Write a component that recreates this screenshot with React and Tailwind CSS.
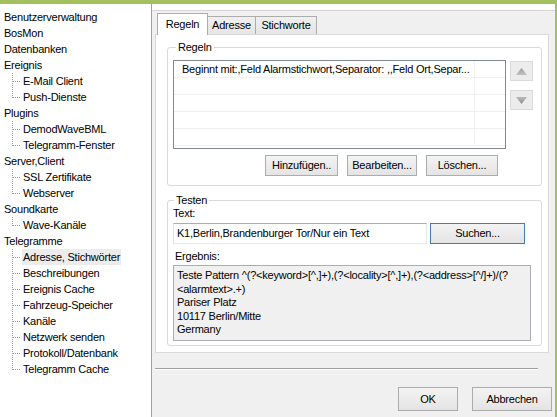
import React from 'react';

const tree = [
  { label: 'Benutzerverwaltung' },
  { label: 'BosMon' },
  { label: 'Datenbanken' },
  { label: 'Ereignis', children: ['E-Mail Client', 'Push-Dienste'] },
  { label: 'Plugins', children: ['DemodWaveBML', 'Telegramm-Fenster'] },
  { label: 'Server,Client', children: ['SSL Zertifikate', 'Webserver'] },
  { label: 'Soundkarte', children: ['Wave-Kanäle'] },
  {
    label: 'Telegramme',
    children: [
      'Adresse, Stichwörter',
      'Beschreibungen',
      'Ereignis Cache',
      'Fahrzeug-Speicher',
      'Kanäle',
      'Netzwerk senden',
      'Protokoll/Datenbank',
      'Telegramm Cache',
    ],
  },
];

const selected = 'Adresse, Stichwörter';

function Connector({ last }) {
  return (
    <svg width="22" height="16" className="shrink-0" shapeRendering="crispEdges">
      <line x1="12.5" y1="0" x2="12.5" y2={last ? 9 : 16} stroke="#a0a0a0" strokeDasharray="1 1" />
      <line x1="13" y1="8.5" x2="21" y2="8.5" stroke="#a0a0a0" strokeDasharray="1 1" />
    </svg>
  );
}

function Tree() {
  return (
    <div className="w-[152px] shrink-0 bg-white border-r border-[#a0a0a0] pt-[5px]">
      {tree.map(node => (
        <div key={node.label}>
          <div className="h-[16px] flex items-center pl-[4px]">{node.label}</div>
          {node.children?.map((c, i) => (
            <div key={c} className="h-[16px] flex items-center">
              <Connector last={i === node.children.length - 1} />
              <span className={`px-[1px] leading-[16px] ${c === selected ? 'bg-[#ececec]' : ''}`}>{c}</span>
            </div>
          ))}
        </div>
      ))}
    </div>
  );
}

function Btn({ className = '', children }) {
  return (
    <div
      className={`flex items-center justify-center border bg-linear-to-b from-[#f3f3f3] to-[#e4e4e4] ${className}`}
    >
      {children}
    </div>
  );
}

function Arrow({ up }) {
  return (
    <div className="w-[23px] h-[20px] border border-[#dadada] bg-[#ececec] flex items-center justify-center">
      <svg width="11" height="7" viewBox="0 0 11 7">
        <defs>
          <linearGradient id={up ? 'gu' : 'gd'} x1="0" y1="0" x2="0" y2="1">
            <stop offset="0" stopColor={up ? '#9a9a9a' : '#b9b9b9'} />
            <stop offset="1" stopColor={up ? '#c2c2c2' : '#8f8f8f'} />
          </linearGradient>
        </defs>
        <polygon points={up ? '0,7 5.5,0 11,7' : '0,0 5.5,7 11,0'} fill={`url(#${up ? 'gu' : 'gd'})`} />
      </svg>
    </div>
  );
}

function GroupLabel({ children, left }) {
  return (
    <span className={`absolute ${left} -top-[7px] bg-white px-[2px] leading-[13px]`}>{children}</span>
  );
}

export default function App() {
  return (
    <div className="w-[557px] h-[417px] flex flex-col overflow-hidden bg-[#f0f0f0] text-black text-[11px] tracking-[-0.22px] font-['Liberation_Sans',Arial,sans-serif]">
      <div className="h-[4px] shrink-0 bg-[#a2c05d]" />
      <div className="flex flex-1 min-h-0 border-r-2 border-[#a2c05d]">
        <Tree />
        <div className="flex-1 flex flex-col">
          <div className="h-[6px] bg-white" />
          <div className="flex-1 border-t border-[#d5d5d5] bg-[#f0f0f0] pt-[2px]">
            {/* Tabs */}
            <div className="ml-[5px] flex items-end h-[21px] relative z-10">
              <div className="w-[51px] h-[22px] -mb-px bg-white border border-b-0 border-[#acacac] flex items-center justify-center">
                Regeln
              </div>
              <div className="w-[48px] h-[18px] border border-b-0 border-l-0 border-[#acacac] bg-linear-to-b from-[#f0f0f0] to-[#e5e5e5] flex items-center justify-center">
                Adresse
              </div>
              <div className="w-[61px] h-[18px] border border-b-0 border-l-0 border-[#acacac] bg-linear-to-b from-[#f0f0f0] to-[#e5e5e5] flex items-center justify-center">
                Stichworte
              </div>
            </div>

            {/* Tab page */}
            <div className="ml-[3px] w-[394px] h-[319px] bg-white border border-[#d9d9d9] pt-[12px] pl-[11px]">
              {/* Regeln group */}
              <div className="relative w-[375px] h-[139px] border border-[#d9d9d9] rounded-[3px] pt-[12px] pl-[5px]">
                <GroupLabel left="left-[8px]">Regeln</GroupLabel>
                <div className="flex">
                  <div className="w-[333px] h-[89px] border border-[#828790] bg-white overflow-hidden">
                    {[0, 1, 2, 3, 4].map(i => (
                      <div key={i} className="flex h-[17px] border-b border-[#f0f0f0]">
                        <div className="w-[301px] border-r border-[#f0f0f0] pl-[8px] leading-[17px] whitespace-nowrap overflow-hidden">
                          {i === 0 ? 'Beginnt mit:,Feld Alarmstichwort,Separator: ,,Feld Ort,Separ...' : ''}
                        </div>
                      </div>
                    ))}
                  </div>
                  <div className="ml-[4px] mt-[1px] flex flex-col gap-[9px]">
                    <Arrow up />
                    <Arrow />
                  </div>
                </div>
                <div className="mt-[6px] ml-[92px] flex gap-[9px]">
                  <Btn className="w-[73px] h-[21px] border-[#acacac]">Hinzufügen..</Btn>
                  <Btn className="w-[70px] h-[21px] border-[#acacac]">Bearbeiten...</Btn>
                  <Btn className="w-[72px] h-[21px] border-[#acacac]">Löschen...</Btn>
                </div>
              </div>

              {/* Testen group */}
              <div className="relative mt-[14px] w-[375px] h-[146px] border border-[#d9d9d9] rounded-[3px] pt-[6px] pl-[5px]">
                <GroupLabel left="left-[6px]">Testen</GroupLabel>
                <div className="leading-[13px]">Text:</div>
                <div className="mt-[3px] flex">
                  <div className="w-[254px] h-[21px] bg-white border border-[#e3e9ef] border-t-[#abadb3] border-l-[#e2e3ea] flex items-center pl-[3px] whitespace-nowrap">
                    K1,Berlin,Brandenburger Tor/Nur ein Text
                  </div>
                  <Btn className="ml-[3px] w-[95px] h-[21px] border-[#3c7fb1]">Suchen...</Btn>
                </div>
                <div className="mt-[6px] ml-[2px] leading-[13px]">Ergebnis:</div>
                <div className="mt-[2px] w-[358px] h-[76px] border border-[#abadb3] bg-[#f0f0f0] pt-[3px] pl-[3px] leading-[13.5px] whitespace-nowrap overflow-hidden">
                  <div>{'Teste Pattern ^(?<keyword>[^,]+),(?<locality>[^,]+),(?<address>[^/]+)/(?'}</div>
                  <div>{'<alarmtext>.+)'}</div>
                  <div>Pariser Platz</div>
                  <div>10117 Berlin/Mitte</div>
                  <div>Germany</div>
                </div>
              </div>
            </div>

            {/* Separator */}
            <div className="mt-[15px] ml-[3px] w-[383px] border-t border-b border-t-[#a0a0a0] border-b-white" />

            {/* Dialog buttons */}
            <div className="mt-[17px] flex justify-end pr-[3px] gap-[14px]">
              <Btn className="w-[60px] h-[24px] border-[#acacac]">OK</Btn>
              <Btn className="w-[80px] h-[24px] border-[#acacac]">Abbrechen</Btn>
            </div>
          </div>
        </div>
      </div>
    </div>
  );
}
